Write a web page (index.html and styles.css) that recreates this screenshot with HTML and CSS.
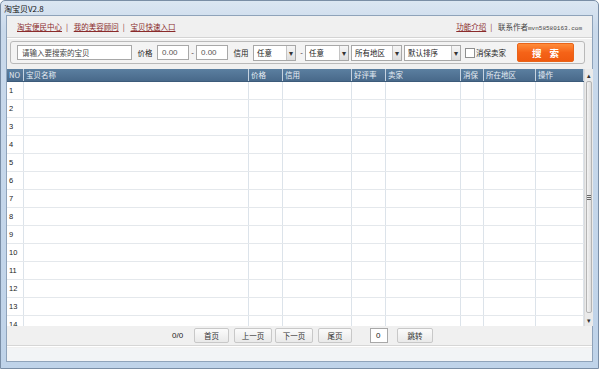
FILE: index.html
```html
<!DOCTYPE html>
<html lang="zh-CN">
<head>
  <meta charset="UTF-8">
  <title>淘宝贝V2.8</title>
  <link rel="stylesheet" href="styles.css">
</head>
<body>

<div class="window">
  <div class="titlebar">淘宝贝V2.8</div>

  <div class="client">
    <div class="links">
      <div class="links-left">
        <a href="#">淘宝便民中心</a><span class="sep">|</span>
        <a href="#">我的美容顾问</a><span class="sep">|</span>
        <a href="#">宝贝快速入口</a>
      </div>
      <div class="links-right">
        <a href="#">功能介绍</a><span class="sep">|</span>
        <span class="contact">联系作者<span class="mono">mvn58580163.com</span></span>
      </div>
    </div>

    <div class="searchbox">
      <div class="field keyword">请输入要搜索的宝贝</div>
      <span class="label">价格</span>
      <div class="field price">0.00</div>
      <span class="dash">-</span>
      <div class="field price">0.00</div>
      <span class="label">信用</span>
      <div class="select w43"><span>任意</span><i>▾</i></div>
      <span class="dash">-</span>
      <div class="select w44"><span>任意</span><i>▾</i></div>
      <div class="select w51"><span>所有地区</span><i>▾</i></div>
      <div class="select w57"><span>默认排序</span><i>▾</i></div>
      <label class="check"><span class="box"></span>消保卖家</label>
      <button class="search-btn">搜 索</button>
    </div>

    <div class="grid">
      <div class="table">
        <div class="row head">
          <div>NO</div><div>宝贝名称</div><div>价格</div><div>信用</div><div>好评率</div><div>卖家</div><div>消保</div><div>所在地区</div><div>操作</div>
        </div>
        <div class="body" id="rows"></div>
      </div>
      <div class="scrollbar">
        <div class="arrow">▴</div>
        <div class="track"><div class="thumb"><span></span><span></span><span></span></div></div>
        <div class="arrow">▾</div>
      </div>
    </div>

    <div class="pager">
      <span class="count">0/0</span>
      <button class="btn first">首页</button>
      <button class="btn prev">上一页</button>
      <button class="btn next">下一页</button>
      <button class="btn last">尾页</button>
      <div class="page-input">0</div>
      <button class="btn jump">跳转</button>
    </div>

    <div class="status"></div>
  </div>
</div>

<script>
  const rows = document.getElementById('rows');
  for (let i = 1; i <= 14; i++) {
    const r = document.createElement('div');
    r.className = 'row';
    r.innerHTML = '<div>' + i + '</div>' + '<div></div>'.repeat(8);
    rows.appendChild(r);
  }
</script>

</body>
</html>
```

FILE: styles.css
```css
* {
  margin: 0;
  padding: 0;
  box-sizing: border-box;
}

body {
  width: 599px;
  height: 369px;
  overflow: hidden;
  background: #fff;
  font-family: "Noto Sans CJK SC", "Liberation Sans", sans-serif;
  font-size: 7.5px;
  color: #222;
  white-space: nowrap;
}

.window {
  width: 599px;
  height: 369px;
  display: flex;
  flex-direction: column;
  background: linear-gradient(#dbe6f2, #c9d9eb 30px, #bfd3e9);
  border: 1px solid #7a8ea6;
  border-radius: 5px 5px 0 0;
  padding: 0 5px 6px 5px;
}

.titlebar {
  height: 14px;
  line-height: 15px;
  margin-left: -2px;
  font-size: 8px;
  color: #111;
}

.client {
  flex: 1;
  display: flex;
  flex-direction: column;
  background: #f0f0f0;
  border: 1px solid #8fa3ba;
}

/* links row */
.links {
  height: 22px;
  display: flex;
  justify-content: space-between;
  align-items: center;
  padding: 0 10px 0 10px;
  border-bottom: 1px solid #d4d4d4;
  box-shadow: 0 1px 0 #fff;
}

.links a {
  color: #8a2b2b;
  text-decoration: underline;
  font-size: 7.5px;
}

.sep {
  color: #8a2b2b;
  margin: 0 4px;
  font-size: 7.5px;
}

.contact {
  color: #444;
  font-size: 7.5px;
}

.mono {
  font-family: "Liberation Mono", monospace;
  font-size: 6px;
}

/* search group */
.searchbox {
  margin: 3px 7px 0 3px;
  height: 23px;
  display: flex;
  align-items: center;
  padding: 0 0 0 6px;
  border: 1px solid #b9b9b9;
  border-radius: 3px;
  background: #f3f3f3;
}

.searchbox > * {
  flex-shrink: 0;
}

.field {
  height: 15px;
  line-height: 13px;
  border: 1px solid #a8a8a8;
  background: #fff;
  color: #444;
  padding-left: 4px;
}

.keyword {
  width: 115px;
}

.price {
  width: 32px;
  font-family: "Liberation Sans", sans-serif;
  font-size: 8px;
  color: #555;
}

.label {
  width: 22px;
  text-align: center;
  margin: 0 1px 0 2px;
}

.dash {
  width: 7px;
  text-align: center;
}

.select {
  height: 16px;
  display: flex;
  align-items: center;
  justify-content: space-between;
  border: 1px solid #a8a8a8;
  background: #fff;
  padding-left: 3px;
  margin-right: 2px;
}

.select i {
  font-style: normal;
  width: 9px;
  height: 14px;
  line-height: 14px;
  text-align: center;
  font-size: 8px;
  color: #333;
  background: linear-gradient(#f6f6f6, #dedede);
  border-left: 1px solid #c4c4c4;
}

.w43 { width: 43px; }
.w44 { width: 44px; }
.w51 { width: 51px; }
.w57 { width: 57px; }

.check {
  display: flex;
  align-items: center;
  margin-left: 2px;
}

.box {
  width: 10px;
  height: 10px;
  border: 1px solid #8e8f8f;
  background: #fff;
  margin-right: 1px;
}

.search-btn {
  width: 57px;
  height: 19px;
  margin-left: 11px;
  border: 1px solid #e8641a;
  border-radius: 2px;
  background: linear-gradient(#ff8c3a, #f56318 50%, #ef5a10);
  color: #fff;
  font-family: inherit;
  font-size: 9.5px;
  font-weight: bold;
  letter-spacing: 3px;
  padding-left: 3px;
  white-space: pre;
}

/* data grid */
.grid {
  margin-top: 5px;
  height: 257px;
  display: flex;
}

.table {
  width: 577px;
  background: #fff;
  display: flex;
  flex-direction: column;
}

.row {
  display: grid;
  grid-template-columns: 17px 225px 34px 69px 34px 75px 23px 52px 48px;
  height: 18px;
  flex-shrink: 0;
  border-bottom: 1px solid #e4e8ec;
}

.row div {
  border-right: 1px solid #dce3ea;
  font-size: 7.5px;
  line-height: 17px;
  padding-left: 2px;
  font-family: "Liberation Sans", sans-serif;
}

.row.head {
  height: 13px;
  background: linear-gradient(#5b7fa0, #48698a);
  border-bottom: 1px solid #3c5b7a;
}

.row.head div {
  color: #e6edf4;
  font-family: "Noto Sans CJK SC", sans-serif;
  font-size: 7.5px;
  line-height: 12px;
  border-right: 1px solid #c6d3e0;
}

.body {
  flex: 1;
  overflow: hidden;
  display: flex;
  flex-direction: column;
}

.scrollbar {
  width: 10px;
  display: flex;
  flex-direction: column;
  background: #eaeaea;
  border-left: 1px solid #dcdcdc;
}

.arrow {
  height: 12px;
  line-height: 12px;
  font-size: 7px;
  text-align: center;
  color: #333;
}

.track {
  flex: 1;
  padding: 0 1px;
}

.thumb {
  height: 232px;
  background: linear-gradient(90deg, #f4f4f4, #dddddd);
  border: 1px solid #b4b4b4;
  border-radius: 2px;
  display: flex;
  flex-direction: column;
  justify-content: center;
  align-items: center;
  gap: 1px;
}

.thumb span {
  width: 4px;
  height: 1px;
  background: #666;
}

/* pager */
.pager {
  height: 20px;
  display: flex;
  align-items: center;
  padding-left: 165px;
  border-bottom: 1px solid #d6d6d6;
  box-shadow: 0 1px 0 #fff;
}

.count {
  width: 22px;
  font-family: "Liberation Sans", sans-serif;
  font-size: 8px;
}

.btn {
  height: 15px;
  border: 1px solid #c8c8c8;
  border-radius: 2px;
  background: linear-gradient(#fbfbfb, #e9e9e9);
  font-family: inherit;
  font-size: 7.5px;
  color: #333;
}

.first { width: 35px; }
.prev { width: 38px; margin-left: 5px; }
.next { width: 38px; margin-left: 3px; }
.last { width: 34px; margin-left: 5px; }
.jump { width: 36px; }

.page-input {
  width: 18px;
  height: 15px;
  margin: 0 9px 0 18px;
  border: 1px solid #a8a8a8;
  background: #fff;
  font-family: "Liberation Sans", sans-serif;
  font-size: 8px;
  line-height: 13px;
  padding-left: 5px;
}

.status {
  flex: 1;
  margin-top: 2px;
  background: #f2f4f6;
}
```
